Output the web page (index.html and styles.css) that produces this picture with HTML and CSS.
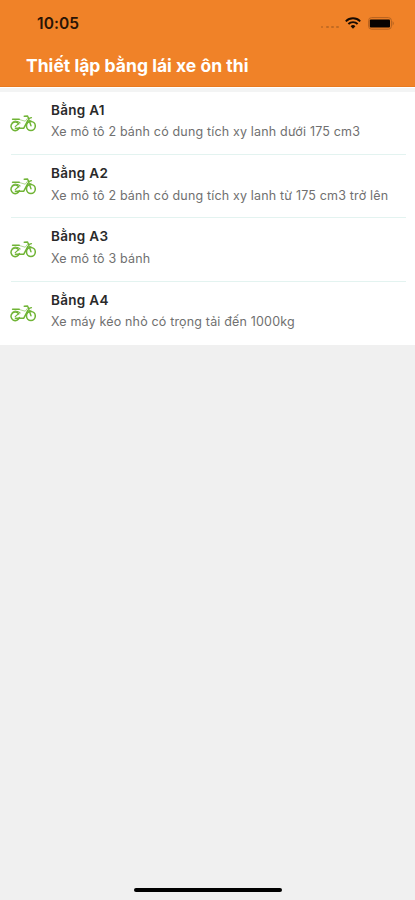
FILE: index.html
```html
<!DOCTYPE html>
<html lang="vi">
<head>
<meta charset="utf-8">
<meta name="viewport" content="width=device-width, initial-scale=1">
<title>Thiết lập bằng lái xe ôn thi</title>
<link rel="stylesheet" href="styles.css">
</head>
<body>
<svg width="0" height="0" class="defs">
  <symbol id="moped" viewBox="0 0 26 18">
    <g fill="none" stroke="currentColor" stroke-linecap="round" stroke-linejoin="round">
      <path d="M8.8 9.8A4.3 4.3 0 1 0 9.4 13.6" stroke-width="1.5"/>
      <path d="M5.2 12.6l3-2.6" stroke-width="1.1"/>
      <circle cx="20.9" cy="12" r="4.4" stroke-width="1.5"/>
      <path d="M2.6 5.2h6.6" stroke-width="1.6"/>
      <path d="M2 8.4Q5 5.8 8.6 7.8l1.6 1" stroke-width="1"/>
      <path d="M5.4 14.2h8.4l4.2-8" stroke-width="1.5"/>
      <path d="M9.6 5.6l5.6 1.6 2-2.6" stroke-width="1" opacity=".55"/>
      <path d="M14.2 2.2l3.4-.2 3.4 9.8M18.4 4.6l3-1" stroke-width="1.4"/>
      <path d="M15.8 11.6q.8-4.4 5.2-5.2" stroke-width="1"/>
    </g>
  </symbol>
</svg>
<div class="screen">
  <header class="header">
    <div class="status">
      <time class="clock">10:05</time>
      <div class="indicators">
        <div class="signal"><i></i><i></i><i></i><i></i></div>
        <svg class="wifi" width="16" height="12" viewBox="0 0 16 12">
          <g fill="none" stroke="#170b03" stroke-width="1.9">
            <path d="M.8 4.3a10.2 10.2 0 0 1 14.4 0"/>
            <path d="M3.4 7a6.5 6.5 0 0 1 9.2 0"/>
          </g>
          <path d="M5.6 9.2a3.4 3.4 0 0 1 4.8 0L8 11.7z" fill="#170b03"/>
        </svg>
        <svg class="battery" width="27" height="13" viewBox="0 0 27 13">
          <rect x=".6" y=".6" width="22.8" height="11.6" rx="3" fill="none" stroke="#b5621f"/>
          <rect x="1.8" y="2.4" width="20.2" height="8" rx="1" fill="#080301"/>
          <path d="M24.6 4q2.4 2.4 0 4.8z" fill="#b5621f"/>
        </svg>
      </div>
    </div>
    <h1 class="title">Thiết lập bằng lái xe ôn thi</h1>
  </header>
  <main class="list">
    <div class="row">
      <svg class="icon" width="26" height="18"><use href="#moped"/></svg>
      <div class="text"><h2>Bằng A1</h2><p>Xe mô tô 2 bánh có dung tích xy lanh dưới 175 cm3</p></div>
    </div>
    <div class="row">
      <svg class="icon" width="26" height="18"><use href="#moped"/></svg>
      <div class="text"><h2>Bằng A2</h2><p>Xe mô tô 2 bánh có dung tích xy lanh từ 175 cm3 trở lên</p></div>
    </div>
    <div class="row">
      <svg class="icon" width="26" height="18"><use href="#moped"/></svg>
      <div class="text"><h2>Bằng A3</h2><p>Xe mô tô 3 bánh</p></div>
    </div>
    <div class="row">
      <svg class="icon" width="26" height="18"><use href="#moped"/></svg>
      <div class="text"><h2>Bằng A4</h2><p>Xe máy kéo nhỏ có trọng tải đến 1000kg</p></div>
    </div>
  </main>
  <div class="home"></div>
</div>
</body>
</html>
```
FILE: styles.css
```css
* { box-sizing: border-box; margin: 0; padding: 0; }
body { background: #f0f0f0; font-family: Inter, "Liberation Sans", sans-serif; }
.defs { display: block; }
.screen { height: 900px; display: flex; flex-direction: column; background: #f0f0f0; overflow: hidden; }
.header { height: 87px; flex: none; background: #f08228; border-bottom: 1px solid #e87a20; }
.status { height: 46px; display: flex; align-items: center; justify-content: space-between; padding: 0 20px 0 37px; }
.clock { padding-top: 2px; font-size: 15.5px; font-weight: 600; line-height: 20px; color: #2a1405; letter-spacing: 0.1px; }
.indicators { display: flex; align-items: center; }
.signal { display: flex; gap: 2.6px; margin: 8px 6px 0 0; }
.signal i { width: 2.6px; height: 2.6px; border-radius: 50%; background: #c26a22; }
.wifi { margin-right: 7px; }
.title { padding-left: 26px; margin-top: 8px; font-size: 17.5px; line-height: 24px; font-weight: 700; color: #fff; letter-spacing: 0.02px; white-space: nowrap; }
.list { flex: none; height: 258px; background: #fff; border-top: 1px solid #fff; box-shadow: inset 0 4px 0 #f3f4f4; padding-top: 4px; }
.row { height: 63.2px; margin: 0 9px 0 11px; display: flex; align-items: flex-start; border-bottom: 1px solid #e3f3f0; white-space: nowrap; }
.row:last-child { border-bottom: 0; }
.icon { margin: 22px 15px 0 -1px; flex: none; color: #70b436; }
.text h2 { padding-top: 8px; font-size: 13.5px; line-height: 20px; font-weight: 600; color: #2a2a2a; letter-spacing: 0.3px; }
.text p { margin-top: 2.4px; font-size: 12.5px; line-height: 20px; font-weight: 400; color: #707070; letter-spacing: 0.17px; }
.home { width: 148px; height: 4px; border-radius: 2px; background: #000; margin: auto auto 8px; }
```
